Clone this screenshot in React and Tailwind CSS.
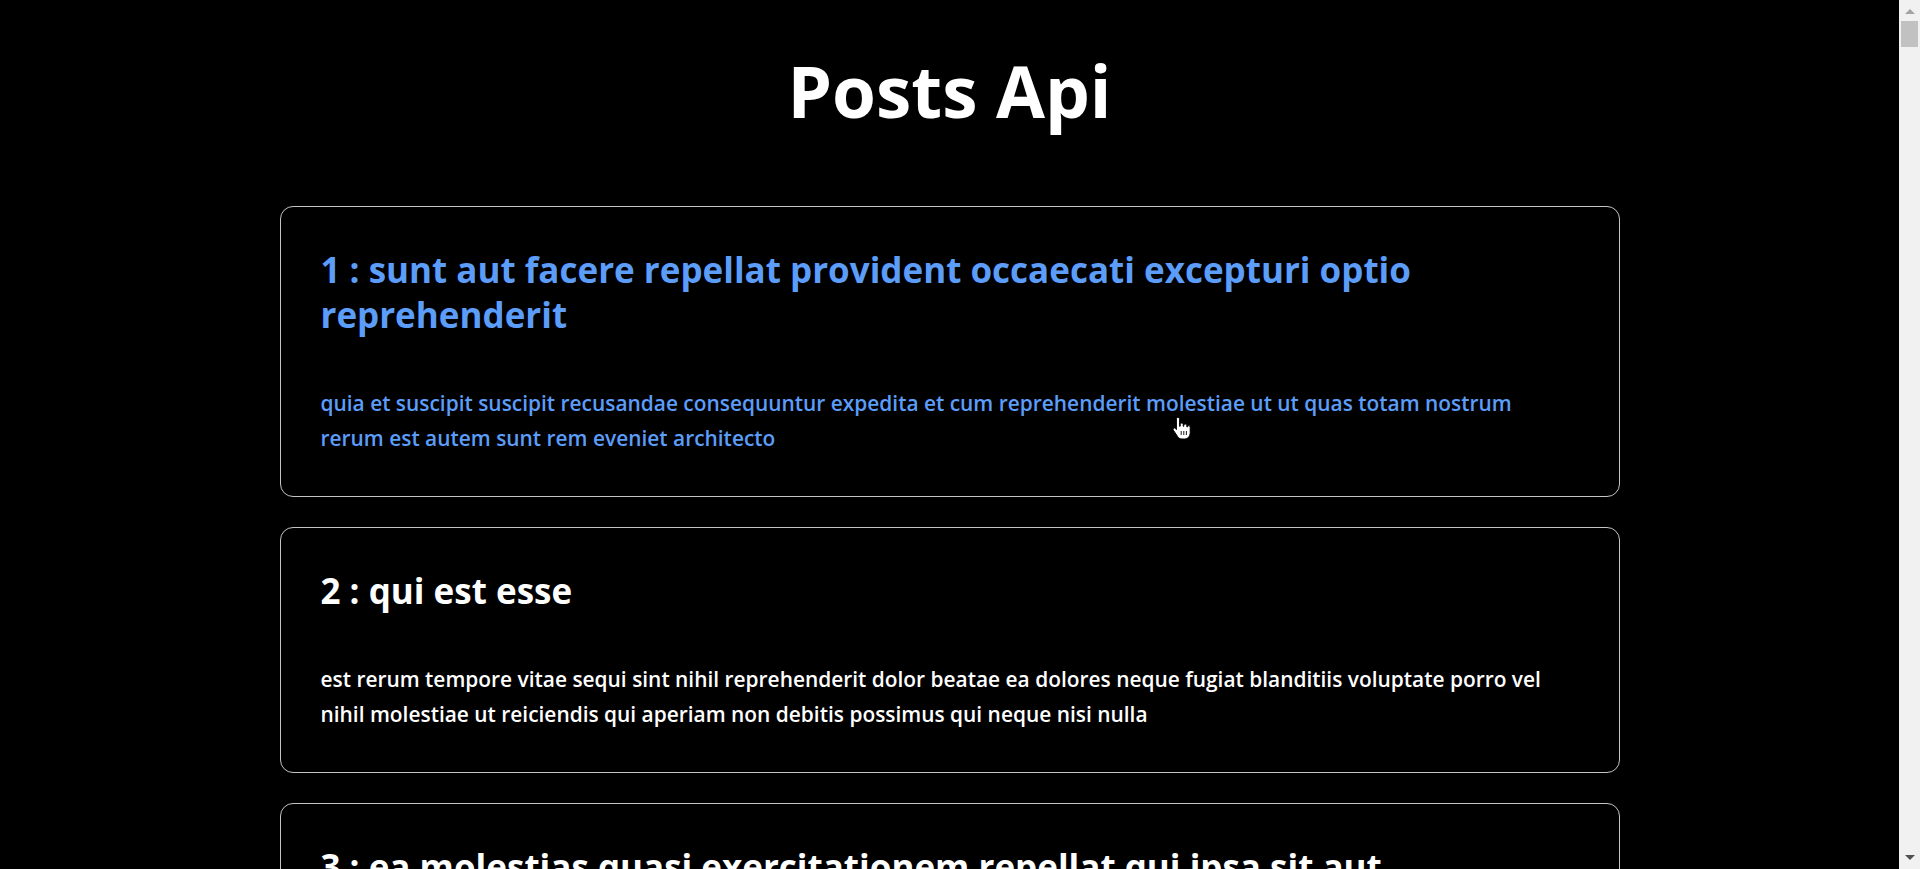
import React from 'react';

const posts = [
  {
    id: 1,
    title: 'sunt aut facere repellat provident occaecati excepturi optio reprehenderit',
    body: 'quia et suscipit suscipit recusandae consequuntur expedita et cum reprehenderit molestiae ut ut quas totam nostrum rerum est autem sunt rem eveniet architecto',
  },
  {
    id: 2,
    title: 'qui est esse',
    body: 'est rerum tempore vitae sequi sint nihil reprehenderit dolor beatae ea dolores neque fugiat blanditiis voluptate porro vel nihil molestiae ut reiciendis qui aperiam non debitis possimus qui neque nisi nulla',
  },
  {
    id: 3,
    title: 'ea molestias quasi exercitationem repellat qui ipsa sit aut',
    body: 'et iusto sed quo iure voluptatem occaecati omnis eligendi aut ad voluptatem doloribus vel accusantium quis pariatur molestiae porro eius odio et labore et velit aut',
  },
  {
    id: 4,
    title: 'eum et est occaecati',
    body: 'ullam et saepe reiciendis voluptatem adipisci sit amet autem assumenda provident rerum culpa quis hic commodi nesciunt rem tenetur doloremque ipsam iure quis sunt voluptatem rerum illo velit',
  },
  {
    id: 5,
    title: 'nesciunt quas odio',
    body: 'repudiandae veniam quaerat sunt sed alias aut fugiat sit autem sed est voluptatem omnis possimus esse voluptatibus quis est aut tenetur dolor neque',
  },
  {
    id: 6,
    title: 'dolorem eum magni eos aperiam quia',
    body: 'ut aspernatur corporis harum nihil quis provident sequi mollitia nobis aliquid molestiae perspiciatis et ea nemo ab reprehenderit accusantium quas voluptate dolores velit et doloremque molestiae',
  },
];

const ScrollBar = () => (
  <div className="fixed top-0 right-0 h-screen w-[21px] bg-[#f1f1f1] flex flex-col items-center">
    <svg width="10" height="6" viewBox="0 0 10 6" className="mt-[8px]">
      <path d="M0 6 L5 1 L10 6 Z" fill="#a3a3a3" />
    </svg>
    <div className="mt-[7px] w-[17px] h-[26px] bg-[#c1c1c1]"></div>
    <div className="flex-1"></div>
    <svg width="10" height="6" viewBox="0 0 10 6" className="mb-[8px]">
      <path d="M0 0 L10 0 L5 5 Z" fill="#505050" />
    </svg>
  </div>
);

const HandCursor = () => (
  <svg
    width="20"
    height="24"
    viewBox="0 0 20 24"
    className="absolute left-[1172px] top-[416px] pointer-events-none"
  >
    <path
      d="M6 1.5c.9 0 1.6.7 1.6 1.6v7.2l.6-.1V8.6c0-.9.7-1.5 1.5-1.5s1.5.6 1.5 1.5v1.6l.6.1V9.5c0-.8.7-1.4 1.5-1.4s1.5.6 1.5 1.4v1.3l.6.1c0-.8.6-1.3 1.4-1.3.8 0 1.4.6 1.4 1.4v5.6c0 3.7-2.3 6.4-5.7 6.4H10c-2 0-3.3-.9-4.4-2.4L1.4 14.2c-.5-.7-.3-1.6.4-2 .6-.4 1.4-.2 1.9.4l.7 1V3.1C4.4 2.2 5.1 1.5 6 1.5z"
      fill="#ffffff"
      stroke="#000000"
      strokeWidth="1"
    />
    <path d="M9.2 15v4M11.8 15v4M14.4 15v4" stroke="#000000" strokeWidth="0.9" />
  </svg>
);

const PostCard = ({ post, active }) => {
  return (
    <div
      className={`border border-[#c4c4c4] rounded-[13px] px-[40px] pt-[40px] pb-[40px] ${
        active ? 'text-[#5b9df9]' : 'text-white'
      }`}
    >
      <h2 className="text-[35px] leading-[45px] font-bold">{`${post.id} : ${post.title}`}</h2>
      <p className="mt-[49px] text-[20.9px] leading-[35px] font-semibold">{post.body}</p>
    </div>
  );
};

export default function App() {
  return (
    <div className="relative min-h-screen bg-black text-white font-['Open_Sans',sans-serif]">
      <div className="w-[1899px] pb-[40px]">
        <h1 className="text-center text-[71px] leading-none font-bold pt-[55px] pb-[80px]">Posts Api</h1>
        <div className="w-[1340px] mx-auto flex flex-col gap-[30px]">
          {posts.map((post) => (
            <PostCard key={post.id} post={post} active={post.id === 1} />
          ))}
        </div>
      </div>
      <HandCursor />
      <ScrollBar />
    </div>
  );
}
